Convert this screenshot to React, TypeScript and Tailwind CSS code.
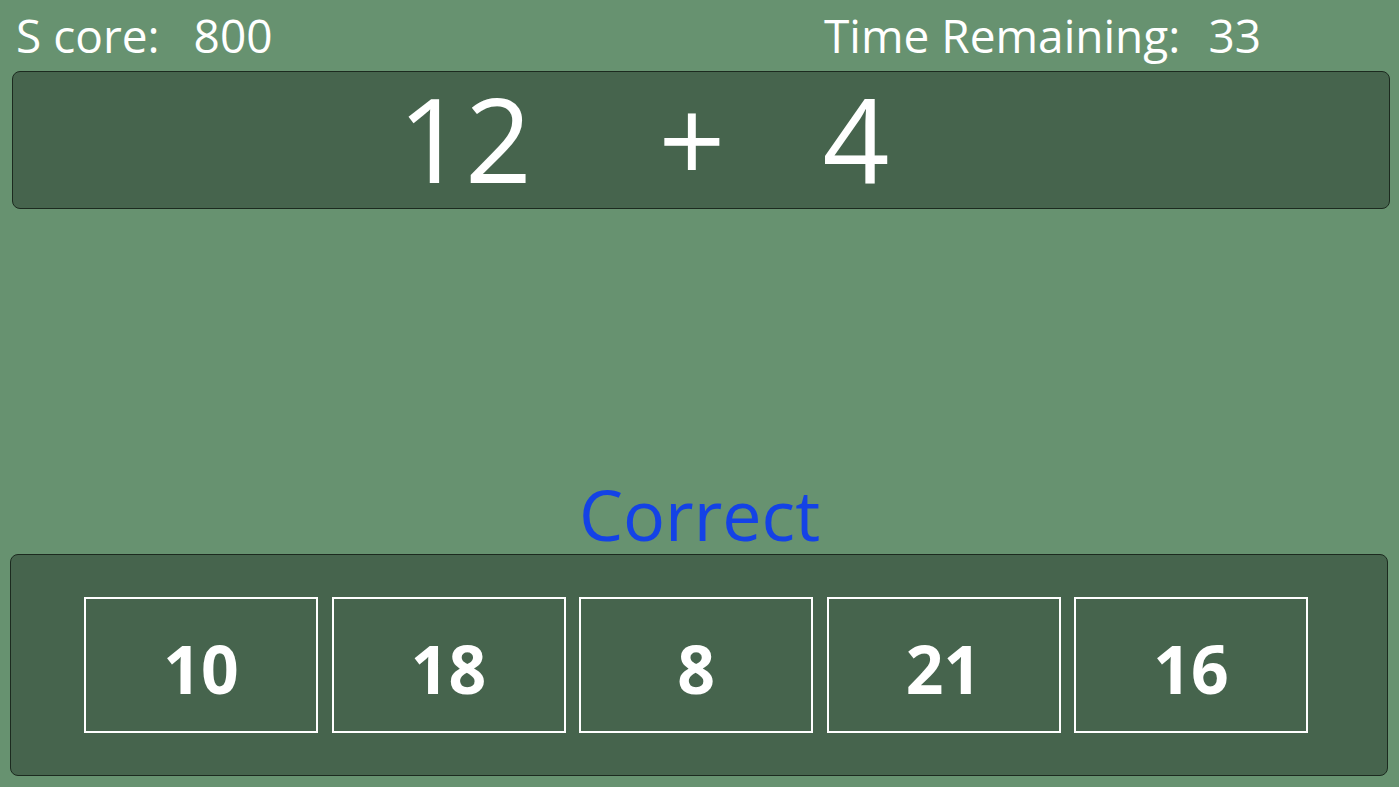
import React from "react";

export default function App() {
  const answers = ["10", "18", "8", "21", "16"];
  return (
    <div
      className="w-[1399px] h-[787px] bg-[#679270] flex flex-col overflow-hidden text-white"
      style={{ fontFamily: '"Open Sans", "Noto Sans", sans-serif' }}
    >
      <div className="h-[71px] flex items-start pt-[12px] text-[46px] leading-none whitespace-pre">
        <div className="pl-[16px] w-[824px] flex">
          <span>S core:</span>
          <span className="ml-[34px]">800</span>
        </div>
        <div className="flex">
          <span>Time Remaining:</span>
          <span className="ml-[28px]">33</span>
        </div>
      </div>
      <div className="ml-[12px] w-[1378px] h-[138px] bg-[#46644d] border border-[#1c2a1f] rounded-[8px] flex items-center text-[117px] leading-none font-normal pb-[6px]">
        <span className="ml-[352px] w-[200px] text-center">12</span>
        <span className="ml-[77px] w-[100px] text-center">+</span>
        <span className="ml-[64px] w-[100px] text-center">4</span>
      </div>
      <div className="flex-1 flex items-end justify-center">
        <div className="text-[#1442e6] text-[70px] leading-none pb-[5px]">Correct</div>
      </div>
      <div className="ml-[10px] w-[1378px] h-[222px] bg-[#46644d] border border-[#1c2a1f] rounded-[8px] flex items-center pl-[73px] gap-[13.5px] mb-[11px]">
        {answers.map((a) => (
          <div
            key={a}
            className="w-[234px] h-[136px] border-2 border-white flex items-center justify-center text-[66px] font-bold leading-none pt-[6px]"
          >
            {a}
          </div>
        ))}
      </div>
    </div>
  );
}
